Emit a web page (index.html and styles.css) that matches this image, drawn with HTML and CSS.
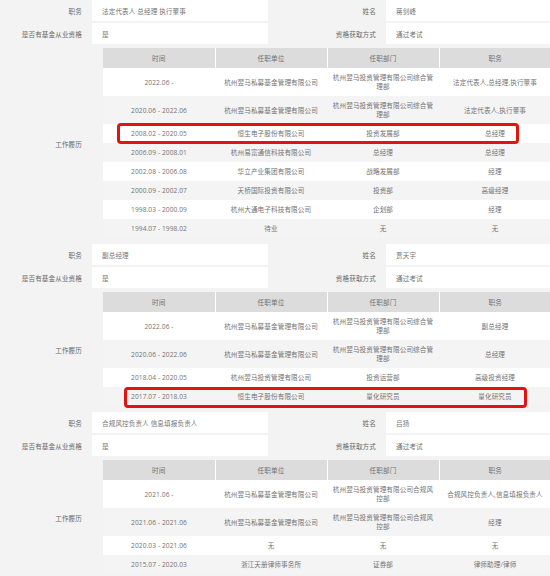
FILE: index.html
```html
<!DOCTYPE html>
<html lang="zh-CN">
<head>
<meta charset="utf-8">
<title>高管信息</title>
<link rel="stylesheet" href="styles.css">
</head>
<body>
<div class="sheet">
  <div class="label">职务</div>
  <div class="value">法定代表人 总经理 执行董事</div>
  <div class="label">姓名</div>
  <div class="value">蒋剑峰</div>
  <div class="label">是否有基金从业资格</div>
  <div class="value">是</div>
  <div class="label">资格获取方式</div>
  <div class="value">通过考试</div>
  <div class="label label-tall">工作履历</div>
  <div class="history">
    <table class="resume">
      <thead>
        <tr><th>时间</th><th>任职单位</th><th>任职部门</th><th>职务</th></tr>
      </thead>
      <tbody>
        <tr><td>2022.06 -</td><td>杭州翌马私募基金管理有限公司</td><td>杭州翌马投资管理有限公司综合管理部</td><td>法定代表人,总经理,执行董事</td></tr>
        <tr><td>2020.06 - 2022.06</td><td>杭州翌马私募基金管理有限公司</td><td>杭州翌马投资管理有限公司综合管理部</td><td>法定代表人,执行董事</td></tr>
        <tr><td class="anchor">2008.02 - 2020.05<span class="mark mark-a"></span></td><td>恒生电子股份有限公司</td><td>投资发展部</td><td>总经理</td></tr>
        <tr><td>2006.09 - 2008.01</td><td>杭州易富通信科技有限公司</td><td>总经理</td><td>总经理</td></tr>
        <tr><td>2002.08 - 2006.08</td><td>华立产业集团有限公司</td><td>战略发展部</td><td>经理</td></tr>
        <tr><td>2000.09 - 2002.07</td><td>天桥国际投资有限公司</td><td>投资部</td><td>高级经理</td></tr>
        <tr><td>1998.03 - 2000.09</td><td>杭州大通电子科技有限公司</td><td>企划部</td><td>经理</td></tr>
        <tr><td>1994.07 - 1998.02</td><td>待业</td><td>无</td><td>无</td></tr>
      </tbody>
    </table>
  </div>

  <div class="label">职务</div>
  <div class="value">副总经理</div>
  <div class="label">姓名</div>
  <div class="value">贾天宇</div>
  <div class="label">是否有基金从业资格</div>
  <div class="value">是</div>
  <div class="label">资格获取方式</div>
  <div class="value">通过考试</div>
  <div class="label label-tall">工作履历</div>
  <div class="history">
    <table class="resume">
      <thead>
        <tr><th>时间</th><th>任职单位</th><th>任职部门</th><th>职务</th></tr>
      </thead>
      <tbody>
        <tr><td>2022.06 -</td><td>杭州翌马私募基金管理有限公司</td><td>杭州翌马投资管理有限公司综合管理部</td><td>副总经理</td></tr>
        <tr><td>2020.06 - 2022.06</td><td>杭州翌马私募基金管理有限公司</td><td>杭州翌马投资管理有限公司综合管理部</td><td>总经理</td></tr>
        <tr><td>2018.04 - 2020.05</td><td>杭州翌马投资管理有限公司</td><td>投资运营部</td><td>高级投资经理</td></tr>
        <tr><td class="anchor">2017.07 - 2018.03<span class="mark mark-b"></span></td><td>恒生电子股份有限公司</td><td>量化研究员</td><td>量化研究员</td></tr>
      </tbody>
    </table>
  </div>

  <div class="label">职务</div>
  <div class="value">合规风控负责人 信息填报负责人</div>
  <div class="label">姓名</div>
  <div class="value">吕扬</div>
  <div class="label">是否有基金从业资格</div>
  <div class="value">是</div>
  <div class="label">资格获取方式</div>
  <div class="value">通过考试</div>
  <div class="label label-tall">工作履历</div>
  <div class="history">
    <table class="resume">
      <thead>
        <tr><th>时间</th><th>任职单位</th><th>任职部门</th><th>职务</th></tr>
      </thead>
      <tbody>
        <tr><td>2021.06 -</td><td>杭州翌马私募基金管理有限公司</td><td>杭州翌马投资管理有限公司合规风控部</td><td>合规风控负责人,信息填报负责人</td></tr>
        <tr><td>2021.06 - 2021.06</td><td>杭州翌马私募基金管理有限公司</td><td>杭州翌马投资管理有限公司合规风控部</td><td>经理</td></tr>
        <tr><td>2020.03 - 2021.06</td><td>无</td><td>无</td><td>无</td></tr>
        <tr><td>2015.07 - 2020.03</td><td>浙江天册律师事务所</td><td>证券部</td><td>律师助理/律师</td></tr>
      </tbody>
    </table>
  </div>
</div>
</body>
</html>
```
FILE: styles.css
```css
html, body {
  margin: 0;
  padding: 0;
  background: #f3f3f3;
  overflow: hidden;
}

body {
  font-family: "Open Sans", "Noto Sans CJK SC", sans-serif;
  font-size: 6.6px;
  letter-spacing: 0.1px;
  color: #737373;
}

.sheet {
  width: 562px;
  display: grid;
  grid-template-columns: 90px 176px 114px 176px;
  gap: 2px;
}

.label {
  height: 21px;
  display: flex;
  align-items: center;
  justify-content: flex-end;
  padding-right: 8px;
  color: #6a6a6a;
}

.label-tall {
  height: auto;
}

.value {
  height: 21px;
  display: flex;
  align-items: center;
  padding-left: 10px;
  background: #fff;
}

.history {
  grid-column: span 3;
  padding: 2px 11px 4px 11px;
}

.resume {
  width: 448px;
  table-layout: fixed;
  border-collapse: collapse;
}

.resume th {
  height: 20px;
  padding: 0 5px;
  font-weight: normal;
  background: #dcdcdc;
  color: #737373;
  text-align: center;
  border-left: 1px solid #fff;
}

.resume th:first-child {
  border-left: none;
}

.resume td {
  padding: 5px 5px;
  line-height: 9px;
  text-align: center;
  background: #fff;
}

.resume tbody tr:nth-child(even) td {
  background: #f4f4f4;
}

.resume td.anchor {
  position: relative;
}

.mark {
  position: absolute;
  box-sizing: border-box;
  height: 21px;
  border: 3px solid #e6120e;
  border-radius: 4px;
  pointer-events: none;
}

.mark-a {
  left: 14px;
  top: -1px;
  width: 402px;
}

.mark-b {
  left: 21px;
  top: 0;
  width: 403px;
}
```
